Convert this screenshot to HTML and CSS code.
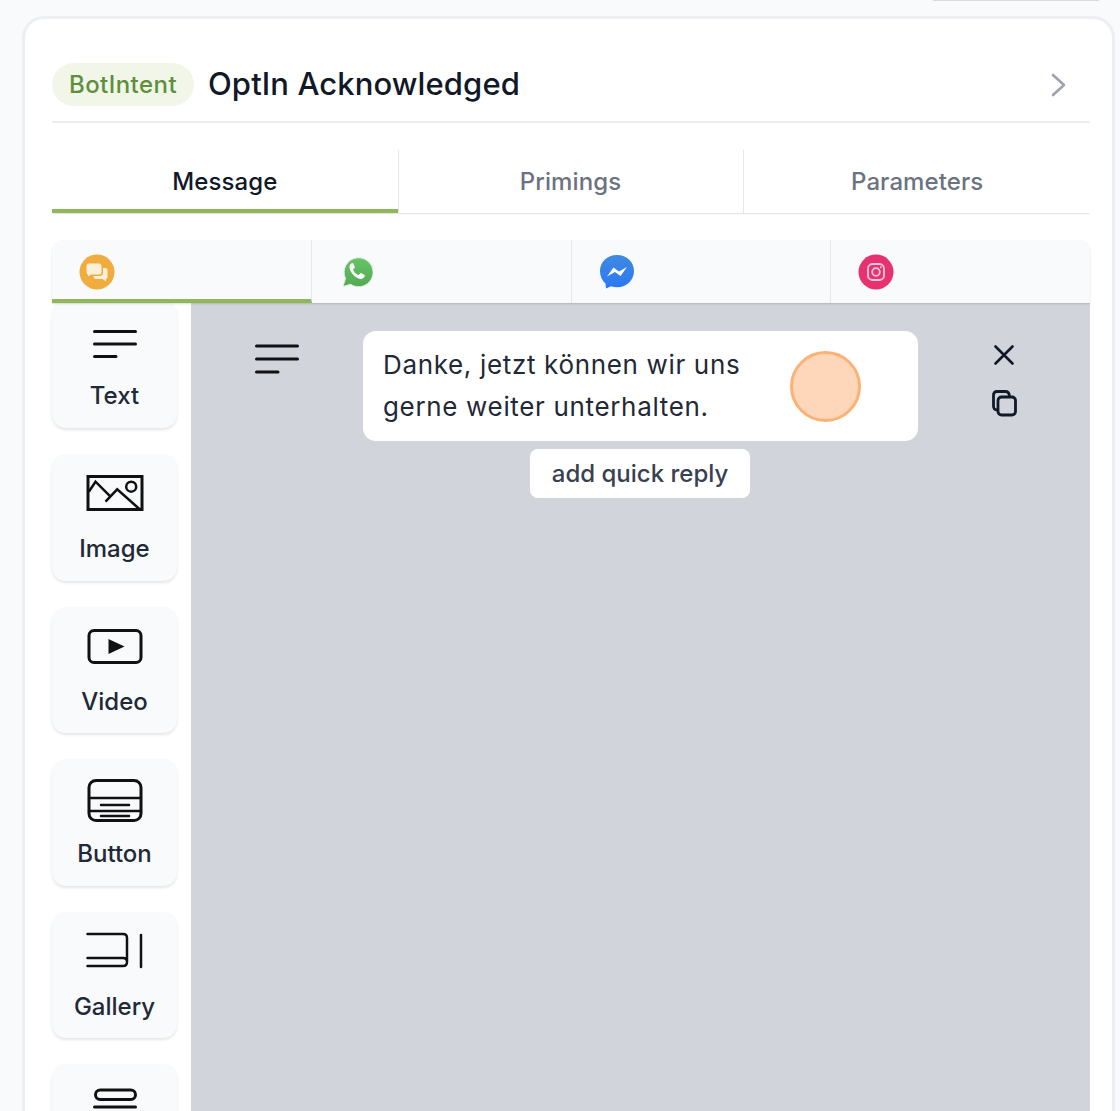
FILE: index.html
```html
<!DOCTYPE html>
<html lang="en">

<head>
    <meta charset="UTF-8">
    <title>OptIn Acknowledged</title>
    <link rel="stylesheet" href="styles.css">
</head>

<body>
    <div class="top-sliver"></div>

    <main class="card">
        <!-- Header -->
        <header class="intent-header">
            <span class="badge">BotIntent</span>
            <h1 class="intent-title">OptIn Acknowledged</h1>
            <svg class="chevron" width="16" height="24" viewBox="0 0 16 24">
                <path d="M2 2 L13 12 L2 22" fill="none" stroke="#9ca3af" stroke-width="2.6" stroke-linecap="round" stroke-linejoin="round" />
            </svg>
        </header>

        <!-- Tabs -->
        <nav class="tabs">
            <div class="tab active">Message</div>
            <div class="tab">Primings</div>
            <div class="tab">Parameters</div>
        </nav>

        <!-- Channels -->
        <div class="channels">
            <div class="channel active">
                <svg width="36" height="36" viewBox="0 0 36 36">
                    <circle cx="18" cy="18" r="17.5" fill="#f0ad3e" />
                    <path d="M7.500 12 q0-2.500 2.500-2.500 h10 q2.500 0 2.500 2.500 v6 q0 2.500-2.500 2.500 h-8 l-3 2 v-2 q-1.500-.2-1.500-2.500z" fill="#fdf0d8" />
                    <path d="M14.500 22 h6 q3.500 0 3.500-3.500 v-4.500 h2 q2.500 0 2.500 2.500 v6 q0 2.500-1.500 2.500 v2.500 l-3.500-2.500 h-6.500 q-2.500 0-2.500-3z" fill="#fdf0d8" />
                </svg>
            </div>
            <div class="channel">
                <svg width="36" height="36" viewBox="0 0 36 36">
                    <defs>
                        <linearGradient id="whatsapp" x1="0" y1="0" x2="0" y2="1">
                            <stop offset="0" stop-color="#66c566" />
                            <stop offset="1" stop-color="#53a953" />
                        </linearGradient>
                    </defs>
                    <path d="M4 32.500 L6.500 24.500 A14.500 14.500 0 1 1 11.500 30.300z" fill="url(#whatsapp)" stroke="#e3efe0" stroke-width="1" />
                    <path d="M12.500 9.500 q-2.500 1.500-2 4.500 q1.500 6 7 9.500 q4 2.500 7 .5 q1.800-1.500 1.200-3 l-3.700-2 q-1 .2-2 1.800 q-.7.5-1.800-.2 q-2.800-1.800-4-4.300 q-.3-1 .8-1.800 q1-.8.800-1.800 l-1.500-3.200 q-.8-.8-1.800-.5z" fill="#fff" />
                </svg>
            </div>
            <div class="channel">
                <svg width="36" height="36" viewBox="0 0 36 36">
                    <defs>
                        <linearGradient id="messenger" x1="0" y1="0" x2="0" y2="1">
                            <stop offset="0" stop-color="#3f8ae0" />
                            <stop offset="1" stop-color="#2a78f5" />
                        </linearGradient>
                    </defs>
                    <path d="M18 1 C8 1 1 8 1 17 C1 22 3 26.500 6.500 29.500 L7 34.500 L12 32.200 C14 33 16 33.300 18 33.300 C28 33.300 35 26 35 17 C35 8 28 1 18 1z" fill="url(#messenger)" />
                    <path d="M8 22.500 L14.500 13.500 L20 17.500 L28 13 L21.500 22 L16 18z" fill="#fff" />
                </svg>
            </div>
            <div class="channel">
                <svg width="36" height="36" viewBox="0 0 36 36">
                    <circle cx="18" cy="18" r="17.500" fill="#e8316f" />
                    <rect x="10" y="10" width="16" height="16" rx="4.500" fill="none" stroke="#fbc9da" stroke-width="1.800" />
                    <circle cx="18" cy="18" r="3.800" fill="none" stroke="#fbc9da" stroke-width="1.800" />
                    <circle cx="22.800" cy="13.200" r="1" fill="#fbc9da" />
                </svg>
            </div>
        </div>

        <!-- Editor -->
        <section class="editor">
            <aside class="palette">
                <div class="tool">
                    <svg class="tool-icon" viewBox="0 0 60 44">
                        <path d="M9.500 10.600 H50.500 M9.500 23 H50.500 M9.500 35.500 H31" />
                    </svg>
                    <div class="tool-label">Text</div>
                </div>
                <div class="tool">
                    <svg class="tool-icon square" viewBox="0 0 60 44">
                        <rect x="3" y="2.500" width="54" height="33" />
                        <path class="thin" d="M3.800 17.700 L10.500 7.700 L25.500 22.700 M20.500 27.700 L32.200 15.300 L55.500 36" />
                        <circle class="thin" cx="46.200" cy="12.700" r="5" />
                    </svg>
                    <div class="tool-label">Image</div>
                </div>
                <div class="tool">
                    <svg class="tool-icon" viewBox="0 0 60 44">
                        <rect x="4" y="3.500" width="52" height="32" rx="5" />
                        <path class="solid" d="M23.500 12 L39.500 19.500 L23.500 27z" />
                    </svg>
                    <div class="tool-label">Video</div>
                </div>
                <div class="tool">
                    <svg class="tool-icon" viewBox="0 0 60 44">
                        <rect x="4" y="1.500" width="52" height="40" rx="7" />
                        <path class="thin" d="M4 19 H56 M4 32 H56 M16 26 H44 M16 37 H44" />
                    </svg>
                    <div class="tool-label">Button</div>
                </div>
                <div class="tool">
                    <svg class="tool-icon" viewBox="0 0 60 44">
                        <path class="thin" d="M2.500 2 H38 q4 0 4 4 V30 q0 4-4 4 H2.500 M2.500 26 H38 q4 0 4 4 M56 3 V35" />
                    </svg>
                    <div class="tool-label">Gallery</div>
                </div>
                <div class="tool">
                    <svg class="tool-icon" viewBox="0 0 60 44">
                        <rect x="10.500" y="6" width="40" height="9.500" rx="4.750" />
                        <path d="M9.500 23 H50.500" />
                    </svg>
                </div>
            </aside>

            <div class="canvas">
                <div class="message-row">
                    <svg class="row-type" width="44" height="30" viewBox="0 0 44 30">
                        <path d="M1.500 2 H42.500 M1.500 15 H42.500 M1.500 28 H23" fill="none" stroke="#111" stroke-width="3" stroke-linecap="round" />
                    </svg>

                    <div class="message-col">
                        <div class="bubble">
                            Danke, jetzt können wir uns<br>gerne weiter unterhalten.
                            <div class="cursor-dot"></div>
                        </div>
                        <button class="quick-reply">add quick reply</button>
                    </div>

                    <div class="row-actions">
                        <svg width="24" height="24" viewBox="0 0 24 24">
                            <path d="M3.500 3.500 L20.500 20.500 M20.500 3.500 L3.500 20.500" fill="none" stroke="#111827" stroke-width="2.600" stroke-linecap="round" />
                        </svg>
                        <svg width="28" height="28" viewBox="0 0 28 28">
                            <rect x="8" y="8" width="17.500" height="18" rx="3.500" fill="none" stroke="#111827" stroke-width="2.800" />
                            <path d="M8 21 h-.5 q-4 0-4-4 V6 q0-3.500 3.500-3.500 h8.500 q3.500 0 4 4.500" fill="none" stroke="#111827" stroke-width="2.800" />
                        </svg>
                    </div>
                </div>
            </div>
        </section>
    </main>
</body>

</html>
```

FILE: styles.css
```css
/* General */
* {
    box-sizing: border-box;
}

html,
body {
    height: 1111px;
    overflow: hidden;
}

body {
    margin: 0;
    background-color: #f9fafb;
    font-family: Inter, "Liberation Sans", sans-serif;
    color: #111827;
}

.top-sliver {
    width: 166px;
    height: 1px;
    margin-left: 933px;
    background-color: #d9dbde;
}

.card {
    width: 1093px;
    height: 1095px;
    overflow: hidden;
    margin: 15px 0 0 22px;
    padding: 0 22px 0 27px;
    background-color: #fff;
    border: 3px solid #eceef1;
    border-bottom: none;
    border-radius: 22px 22px 0 0;
}

/* Header */
.intent-header {
    display: flex;
    align-items: center;
    height: 104px;
    padding: 44px 23px 15px 0;
    border-bottom: 2px solid #eceef0;
}

.badge {
    display: flex;
    align-items: center;
    justify-content: center;
    width: 142px;
    height: 43px;
    border-radius: 22px;
    background-color: #f1f6e8;
    color: #5d8f3c;
    font-size: 24px;
    font-weight: 500;
    letter-spacing: 0.45px;
}

.intent-title {
    margin: -2px 0 0 14px;
    font-size: 31px;
    font-weight: 500;
    letter-spacing: 0.1px;
    line-height: 43px;
}

.chevron {
    margin-left: auto;
}

/* Tabs */
.tabs {
    display: flex;
    height: 63px;
    margin-top: 27px;
    box-shadow: 0 2px 1px -1px rgba(0, 0, 0, 0.1);
}

.tab {
    flex: 1;
    display: flex;
    align-items: center;
    justify-content: center;
    border-right: 1px solid #e5e7eb;
    font-size: 24px;
    font-weight: 500;
    letter-spacing: 0.1px;
    color: #6b7280;
}

.tab:last-child {
    border-right: none;
}

.tab.active {
    padding-top: 4px;
    color: #111827;
    border-bottom: 4px solid #8fb859;
    border-right: none;
    box-shadow: 1px 0 0 #e5e7eb;
}

/* Channels */
.channels {
    position: relative;
    z-index: 1;
    display: flex;
    height: 63px;
    margin-top: 27px;
    background-color: #f9fafb;
    border-radius: 12px 12px 0 0;
    box-shadow: 0 1px 2px rgba(0, 0, 0, 0.15);
}

.channel {
    flex: 1;
    display: flex;
    align-items: center;
    height: 63px;
    padding-left: 27px;
    border-right: 1px solid #e5e7eb;
}

.channel:last-child {
    border-right: none;
}

.channel.active {
    padding-top: 4px;
    border-bottom: 4px solid #8fb859;
}

/* Editor */
.editor {
    display: flex;
    height: 808px;
}

.palette {
    width: 139px;
    display: flex;
    flex-direction: column;
    gap: 26.100px;
    margin-top: -1.600px;
    flex-shrink: 0;
}

.tool {
    width: 125px;
    height: 126.500px;
    flex-shrink: 0;
    padding-top: 20px;
    background-color: #f9fafb;
    border-radius: 14px;
    box-shadow: 0 2px 3px rgba(0, 0, 0, 0.1);
    text-align: center;
}

.tool-icon {
    display: block;
    width: 60px;
    height: 44px;
    margin: 0 auto;
    fill: none;
    stroke: #111;
    stroke-width: 3;
    stroke-linecap: round;
}

.tool-icon .thin {
    stroke-width: 2.500;
}

.tool-icon .solid {
    fill: #111;
    stroke: none;
}

.tool-icon.square {
    stroke-linecap: butt;
}

.tool-label {
    margin-top: 13px;
    font-size: 24px;
    font-weight: 500;
    line-height: 36px;
    color: #1f2937;
}

.canvas {
    flex: 1;
    background-color: #d1d5db;
}

.message-row {
    display: grid;
    grid-template-columns: 1fr 555px 1fr;
    padding-top: 28px;
}

.row-type {
    justify-self: center;
    margin: 13px 0 0 0;
}

.message-col {
    display: flex;
    flex-direction: column;
    align-items: center;
    gap: 8px;
}

.bubble {
    position: relative;
    width: 100%;
    height: 110px;
    padding: 13px 20px;
    background-color: #fff;
    border-radius: 13px;
    font-size: 26px;
    letter-spacing: 0.66px;
    line-height: 42px;
    color: #1f2937;
}

/* Touch marker on top of the bubble */
.cursor-dot {
    position: absolute;
    left: 427px;
    top: 20px;
    width: 71px;
    height: 71px;
    border-radius: 50%;
    background-color: #fed7ba;
    border: 3px solid #fdb275;
}

.quick-reply {
    width: 220px;
    height: 49px;
    margin-right: 1px;
    padding: 0;
    border: none;
    border-radius: 8px;
    background-color: #fff;
    font-family: inherit;
    font-size: 24px;
    font-weight: 500;
    color: #374151;
}

.row-actions {
    display: flex;
    flex-direction: column;
    align-items: center;
    gap: 22px;
    padding-top: 12px;
}
```
